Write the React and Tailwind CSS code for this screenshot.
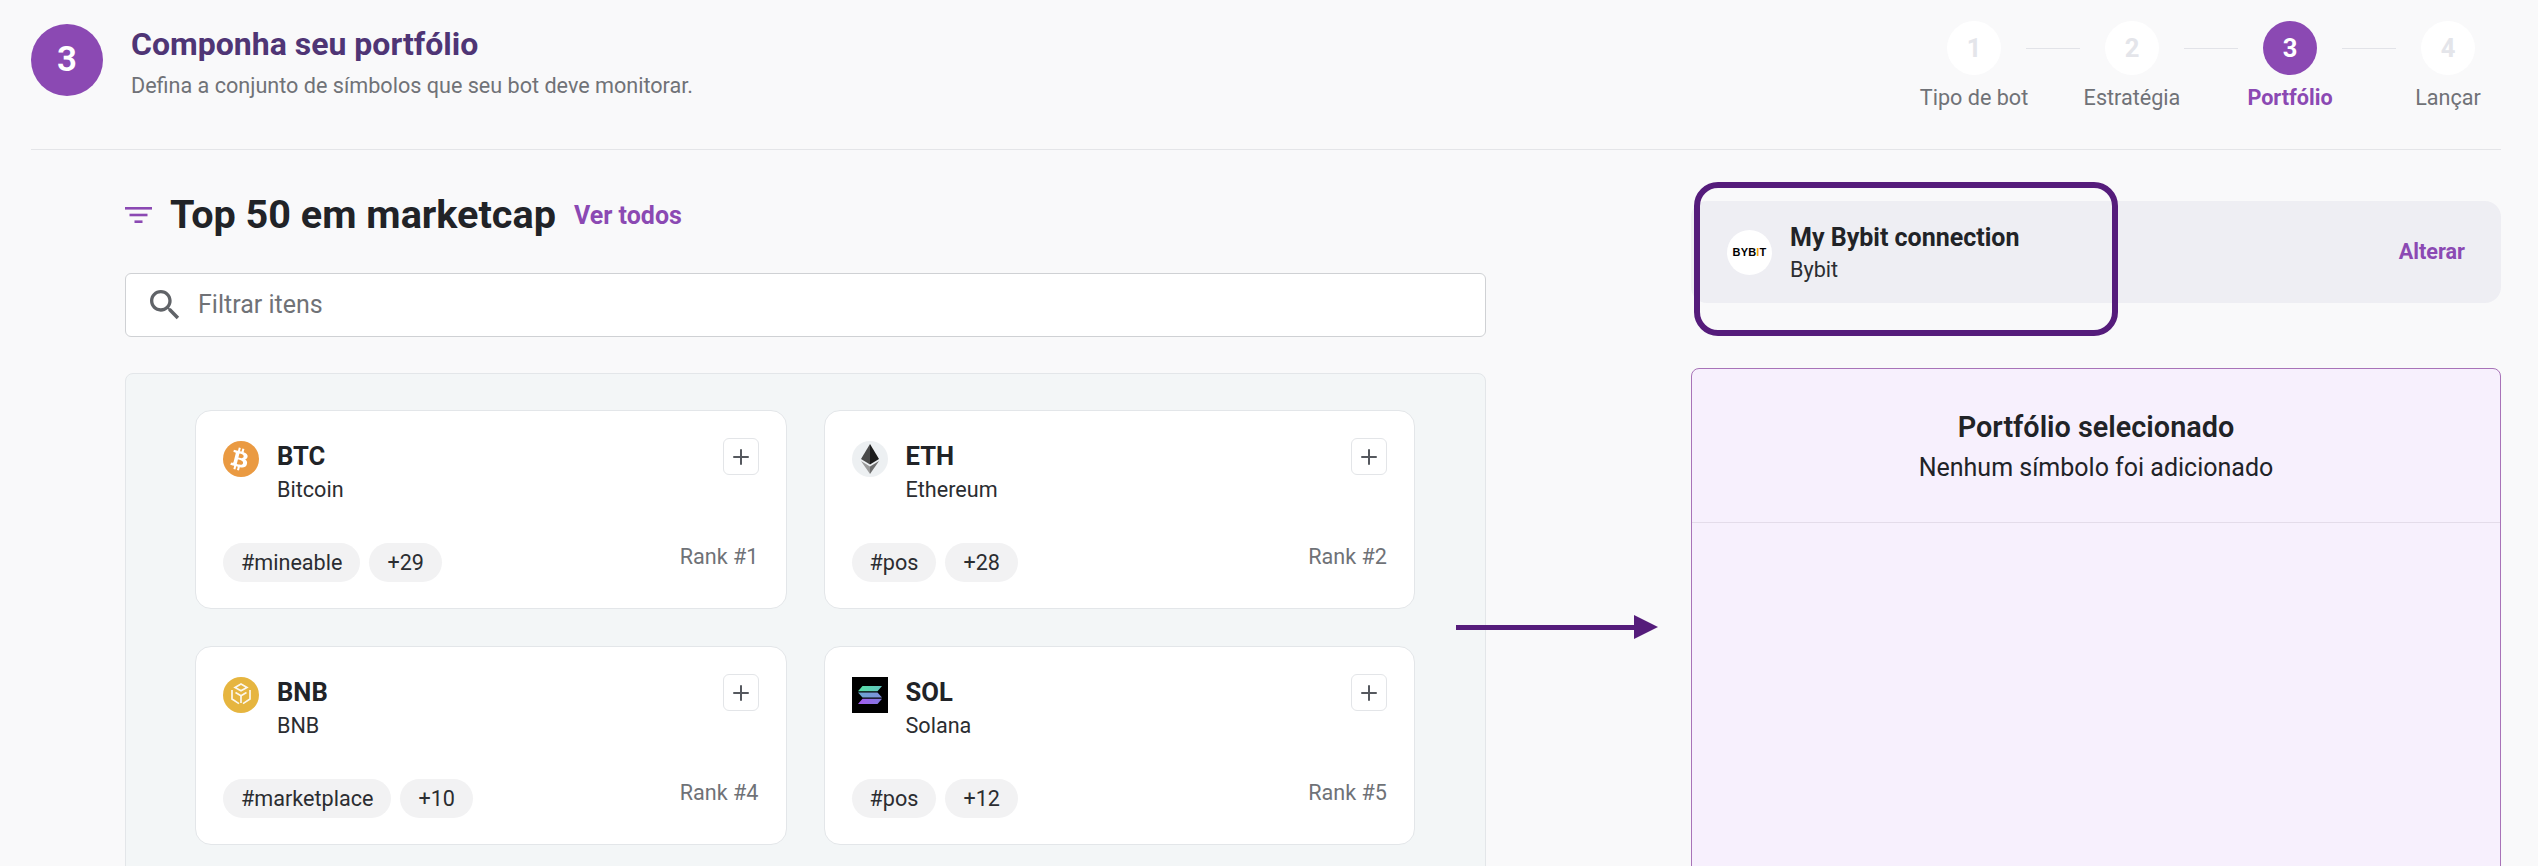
import React from 'react';
import { Plus } from 'lucide-react';

const STEPS = [
  { n: 1, label: 'Tipo de bot' },
  { n: 2, label: 'Estratégia' },
  { n: 3, label: 'Portfólio', active: true },
  { n: 4, label: 'Lançar' },
];

const BtcIcon = () => (
  <svg viewBox="0 0 36 36" className="w-[36px] h-[36px]">
    <circle cx="18" cy="18" r="18" fill="#ea9a42" />
    <path
      d="M24.6 15.8c.4-2.4-1.5-3.7-4-4.6l.8-3.3-2-.5-.8 3.2-1.6-.4.8-3.2-2-.5-.8 3.3-1.3-.3-2.8-.7-.5 2.1s1.5.3 1.4.4c.8.2 1 .7.9 1.1l-2.2 8.9c-.1.3-.4.6-.9.5 0 0-1.4-.4-1.4-.4l-1 2.3 2.6.7 1.4.4-.8 3.3 2 .5.8-3.3 1.6.4-.8 3.3 2 .5.8-3.3c3.4.6 6 .4 7-2.7.9-2.5 0-3.9-1.8-4.9 1.3-.3 2.3-1.2 2.6-3zm-4.6 6.4c-.6 2.5-4.8 1.1-6.2.8l1.1-4.4c1.4.3 5.8 1 5.1 3.6zm.6-6.4c-.6 2.3-4.1 1.1-5.2.8l1-4c1.1.3 4.8.8 4.2 3.2z"
      fill="#fff"
    />
  </svg>
);

const EthIcon = () => (
  <svg viewBox="0 0 36 36" className="w-[36px] h-[36px]">
    <circle cx="18" cy="18" r="18" fill="#edf0f2" />
    <path d="M18 3L9 18l9 5.4z" fill="#4a4a4a" />
    <path d="M18 3l9 15-9 5.4z" fill="#1c1c1c" />
    <path d="M9 20l9 13v-7.6z" fill="#9a9a9a" />
    <path d="M27 20l-9 13v-7.6z" fill="#6e6e6e" />
  </svg>
);

const BnbIcon = () => (
  <svg viewBox="0 0 36 36" className="w-[36px] h-[36px]">
    <circle cx="18" cy="18" r="18" fill="#e6b53f" />
    <g fill="none" stroke="#fff" strokeWidth="1.7" opacity="0.9">
      <path d="M18 7l6 3.4-6 3.4-6-3.4z" />
      <path d="M9 13v9l7 4.6" />
      <path d="M27 13v9l-7 4.6" />
      <path d="M12.5 15.5l5.5 3.2 5.5-3.2" />
      <path d="M18 19v7" />
    </g>
  </svg>
);

const SolIcon = () => (
  <svg viewBox="0 0 36 36" className="w-[36px] h-[36px]">
    <defs>
      <linearGradient id="solTop" x1="0" y1="0" x2="1" y2="0">
        <stop offset="0" stopColor="#56e0a4" />
        <stop offset="1" stopColor="#63c4c0" />
      </linearGradient>
      <linearGradient id="solMid" x1="0" y1="0" x2="1" y2="0">
        <stop offset="0" stopColor="#6aa6d0" />
        <stop offset="1" stopColor="#7f8fdc" />
      </linearGradient>
      <linearGradient id="solBot" x1="0" y1="0" x2="1" y2="0">
        <stop offset="0" stopColor="#a65cf0" />
        <stop offset="1" stopColor="#7f7ae0" />
      </linearGradient>
    </defs>
    <rect width="36" height="36" fill="#000" />
    <path d="M10.5 9H30l-4.5 5.2H6z" fill="url(#solTop)" />
    <path d="M6 15.4h19.5l4.5 5.2H10.5z" fill="url(#solMid)" />
    <path d="M10.5 21.8H30L25.5 27H6z" fill="url(#solBot)" />
  </svg>
);

const COINS = [
  { sym: 'BTC', name: 'Bitcoin', tag: '#mineable', more: '+29', rank: 1, Icon: BtcIcon },
  { sym: 'ETH', name: 'Ethereum', tag: '#pos', more: '+28', rank: 2, Icon: EthIcon },
  { sym: 'BNB', name: 'BNB', tag: '#marketplace', more: '+10', rank: 4, Icon: BnbIcon },
  { sym: 'SOL', name: 'Solana', tag: '#pos', more: '+12', rank: 5, Icon: SolIcon },
];

const CoinCard = ({ coin }) => {
  const { Icon } = coin;
  return (
    <div className="h-[199px] bg-white border border-[#e3e6e9] rounded-[16px] pl-[27px] pr-[27px] pt-[27px] flex flex-col">
      <div className="flex justify-between items-start">
        <div className="flex items-start gap-[18px] pt-[3px]">
          <Icon />
          <div className="flex flex-col">
            <span className="text-[25.6px] leading-[30px] font-bold text-[#212327]">{coin.sym}</span>
            <span className="text-[21.6px] leading-[26px] mt-[6px] text-[#2b2d31]">{coin.name}</span>
          </div>
        </div>
        <button className="w-[36px] h-[37px] bg-white border border-[#e3e5e8] rounded-[6px] flex items-center justify-center text-[#55585e]">
          <Plus size={24} strokeWidth={2} />
        </button>
      </div>
      <div className="flex justify-between items-start mt-auto mb-[26px]">
        <div className="flex gap-[9px]">
          <span className="h-[39px] px-[18px] rounded-full bg-[#f2f2f3] text-[21.6px] leading-[39px] text-[#2b2d31]">{coin.tag}</span>
          <span className="h-[39px] px-[18px] rounded-full bg-[#f2f2f3] text-[21.6px] leading-[39px] text-[#2b2d31]">{coin.more}</span>
        </div>
        <span className="text-[21.6px] leading-[28px] text-[#6f7277]">Rank #{coin.rank}</span>
      </div>
    </div>
  );
};

export default function App() {
  return (
    <div className="relative w-[2538px] h-[866px] overflow-hidden bg-[#f9f9fa] font-['Roboto',sans-serif]">
      <div className="pl-[31px] pr-[37px]">
        {/* Header + stepper */}
        <div className="h-[150px] border-b border-[#e4e5e8] flex justify-between items-start">
          <div className="flex items-start gap-[28px] pt-[24px]">
            <div className="w-[72px] h-[72px] rounded-full bg-[#8b49b3] flex items-center justify-center text-white text-[35px] font-semibold">3</div>
            <div className="flex flex-col">
              <span className="text-[32px] leading-[38px] mt-[1px] font-bold text-[#4f3575]">Componha seu portfólio</span>
              <span className="text-[21.6px] leading-[28px] mt-[9px] text-[#707277]">Defina a conjunto de símbolos que seu bot deve monitorar.</span>
            </div>
          </div>
          <div className="flex pt-[21px] mr-[-26px]">
            {STEPS.map((s, i) => (
              <div key={s.n} className="relative w-[158px] flex flex-col items-center">
                <div className={`w-[54px] h-[54px] rounded-full flex items-center justify-center text-[25.6px] font-bold ${s.active ? 'bg-[#8b49b3] text-white' : 'bg-white text-[#e4e5ea]'}`}>{s.n}</div>
                <span className={`text-[21.6px] leading-[28px] mt-[9px] whitespace-nowrap ${s.active ? 'font-bold text-[#8b49b3]' : 'text-[#707277]'}`}>{s.label}</span>
                {i < 3 && <div className="absolute left-[131px] top-[27px] w-[54px] h-px bg-[#e2e3e8]" />}
              </div>
            ))}
          </div>
        </div>

        <div className="flex">
          {/* Left column */}
          <div className="w-[1361px] ml-[94px] shrink-0">
            <div className="flex items-center h-[50px] mt-[40px]">
              <svg viewBox="0 0 27 16" className="w-[27px] h-[16px] shrink-0 mr-[18px]" fill="#8b49b3">
                <rect x="0" y="0" width="27" height="2.6" />
                <rect x="4.5" y="6.7" width="18" height="2.6" />
                <rect x="9.5" y="13.4" width="8" height="2.6" />
              </svg>
              <span className="text-[39.6px] font-bold text-[#212327]">Top 50 em marketcap</span>
              <span className="ml-[18px] text-[25px] font-bold text-[#8b49b3] mt-[2px]">Ver todos</span>
            </div>
            <div className="mt-[33px] h-[64px] bg-white border border-[#cfd1d4] rounded-[6px] flex items-center pl-[19px]">
              <svg viewBox="0 0 24 24" className="w-[40px] h-[40px] shrink-0" fill="#606368">
                <path d="M15.5 14h-.79l-.28-.27C15.41 12.59 16 11.11 16 9.5 16 5.91 13.09 3 9.5 3S3 5.91 3 9.5 5.91 16 9.5 16c1.61 0 3.09-.59 4.23-1.57l.27.28v.79l5 4.99L20.49 19l-4.99-5zm-6 0C7.01 14 5 11.99 5 9.5S7.01 5 9.5 5 14 7.01 14 9.5 11.99 14 9.5 14z" />
              </svg>
              <span className="ml-[13px] text-[25px] text-[#707277]">Filtrar itens</span>
            </div>
            <div className="mt-[36px] h-[600px] bg-[#f3f6f7] border border-[#e3e6e9] rounded-[8px] pl-[69px] pr-[70px] pt-[36px]">
              <div className="grid grid-cols-2 gap-x-[37px] gap-y-[37px]">
                {COINS.map((c) => <CoinCard key={c.sym} coin={c} />)}
              </div>
            </div>
          </div>

          {/* Right column */}
          <div className="w-[810px] ml-[205px] shrink-0">
            <div className="mt-[51px] h-[102px] bg-[#eeeef3] rounded-[16px] flex items-center pl-[36px] pr-[36px]">
              <div className="w-[45px] h-[45px] rounded-full bg-white flex items-center justify-center shrink-0">
                <span className="text-[11px] font-bold text-black tracking-[0.2px] font-['Liberation_Sans',sans-serif]">BYB<span className="text-[#f7a600]">I</span>T</span>
              </div>
              <div className="ml-[18px] flex flex-col pt-[2px]">
                <span className="text-[25px] leading-[30px] font-bold text-[#212327]">My Bybit connection</span>
                <span className="text-[21.6px] leading-[26px] mt-[4px] text-[#2b2d31]">Bybit</span>
              </div>
              <span className="ml-auto text-[21.6px] font-bold text-[#8b49b3]">Alterar</span>
            </div>
            <div className="mt-[65px] h-[600px] bg-[#f7f0fd] border border-[#a873b8] rounded-[8px]">
              <div className="h-[154px] border-b border-[#e4dcea] flex flex-col items-center pt-[38px]">
                <span className="text-[28.8px] leading-[40px] font-semibold text-[#212327]">Portfólio selecionado</span>
                <span className="text-[25px] leading-[32px] mt-[5px] text-[#212327]">Nenhum símbolo foi adicionado</span>
              </div>
            </div>
          </div>
        </div>
      </div>

      {/* Tour highlight over the connection card */}
      <div className="absolute left-[1694px] top-[182px] w-[424px] h-[154px] border-[6px] border-[#551c7b] rounded-[24px]" />

      {/* Arrow between the two columns */}
      <svg className="absolute left-[1456px] top-[615px] w-[203px] h-[24px]" viewBox="0 0 203 24">
        <rect x="0" y="10" width="180" height="5" fill="#551c7b" />
        <path d="M178 0l24 12-24 12z" fill="#551c7b" />
      </svg>
    </div>
  );
}
